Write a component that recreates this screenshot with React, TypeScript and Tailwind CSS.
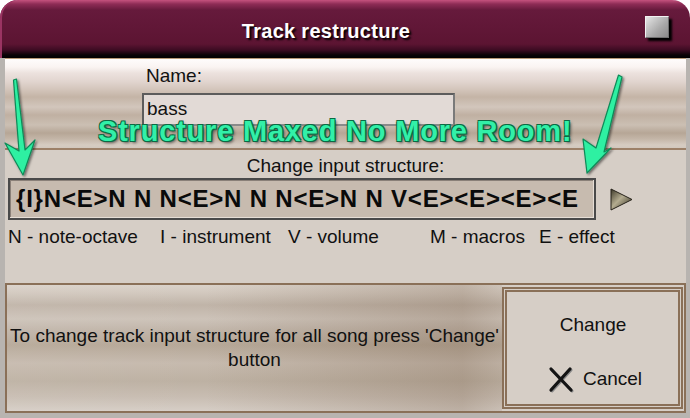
export default function App() {
  return (
    <div className="relative h-[418px] w-[690px] overflow-hidden bg-white font-['Liberation_Sans',Arial,sans-serif] text-[#111]">
      <div className="flex h-full flex-col">
        {/* title bar */}
        <div className="flex h-[58px] shrink-0 items-center rounded-t-[18px] bg-[linear-gradient(to_bottom,#c4527e_0px,#8e2c56_4px,#661a3c_10px,#5c1432_44px,#3c0b22_50px,#0a0206_55px,#000_58px)] pl-[7px] shadow-[inset_2px_0_0_#9a3462]">
          <div className="flex-1 pt-[3px] text-center text-[20px] font-bold tracking-[0.3px] text-white [text-shadow:2px_2px_2px_#000]">
            Track restructure
          </div>
          <div className="mr-[21px] mb-[4px] h-[22px] w-[24px] border border-[#f2f2f2] border-r-[#707070] border-b-[#707070] bg-[linear-gradient(135deg,#e6e6e6,#a8a8a8_60%,#8a8a8a)] shadow-[3px_3px_2px_#000]" />
        </div>

        {/* body */}
        <div className="flex flex-1 flex-col border-r-[4px] border-b-[5px] border-l-[5px] border-[#b8b4b0] bg-[#d6cec6]">
          {/* name panel */}
          <div className="h-[92px] shrink-0 border-t border-b-2 border-t-[#b89878] border-b-[#9c8068] bg-[linear-gradient(to_bottom,#fefcfc_0px,#faf4f2_8px,#ece2de_14px,#e2d6d0_22px,#d4c6bc_30px,#c4b4a6_38px,#d2c6bc_48px,#c0b0a2_56px,#cbbfb3_66px,#b6a696_74px,#c4b6a8_80px,#d6ccc2_86px,#cfc5bb_91px)] pl-[137px] pt-[7px]">
            <div className="h-[20px] pl-[4px] text-[19px] leading-[20px]">Name:</div>
            <div className="mt-[7px] flex h-[33px] w-[313px] items-center border-2 border-[#5c5c5c] border-r-[#7a7a7a] border-b-[#8a8a8a] bg-[#e2dad6] pl-[3px] text-[19px]">
              bass
            </div>
          </div>

          {/* structure label */}
          <div className="h-[28px] shrink-0 pt-[2px] text-center text-[19px] leading-[28px]">
            Change input structure:
          </div>

          {/* structure input */}
          <div className="flex h-[42px] shrink-0 items-center pl-[3px]">
            <div className="flex h-full w-[588px] items-center overflow-hidden border-2 border-[#4a4a4a] bg-[#c7bbaf] pl-[6px] text-[24px] font-bold tracking-[0.8px] whitespace-nowrap text-[#0a0a0a] shadow-[inset_-1px_-1px_0_#e6ded6,inset_1px_1px_0_#8a8078]">
              {"{I}N<E>N N N<E>N N N<E>N N V<E><E><E><E"}
            </div>
            <svg className="ml-[14px]" width="23" height="23" viewBox="0 0 23 23">
              <defs>
                <linearGradient id="tri" x1="0" y1="0" x2="1" y2="1">
                  <stop offset="0" stopColor="#3c3828" />
                  <stop offset="0.45" stopColor="#b4ac90" />
                  <stop offset="1" stopColor="#2a2618" />
                </linearGradient>
              </defs>
              <polygon points="1,1 22,11.5 1,22" fill="url(#tri)" stroke="#26221a" strokeWidth="1" />
            </svg>
          </div>

          {/* legend */}
          <div className="mt-[8px] flex h-[18px] shrink-0 pl-[3px] text-[19px] leading-[18px] whitespace-nowrap">
            <span className="w-[152px]">N - note-octave</span>
            <span className="w-[128px]">I - instrument</span>
            <span className="w-[142px]">V - volume</span>
            <span className="w-[109px]">M - macros</span>
            <span>E - effect</span>
          </div>

          {/* bottom panel */}
          <div className="mt-auto flex h-[130px] shrink-0 border-2 border-[#8a7058]">
            <div className="flex flex-1 flex-col items-center justify-center bg-[linear-gradient(to_right,rgba(255,255,255,0.05)_0%,transparent_40%,rgba(100,70,45,0.22)_92%,rgba(100,70,45,0.1)_100%),linear-gradient(to_bottom,#dad2ca_0px,#d2c8be_8px,#c0b4a8_20px,#cdc3b9_34px,#c0b4a8_46px,#b6a898_60px,#c6baae_78px,#bdb1a3_96px,#c8bdb2_112px,#d6cec6_126px)] text-center text-[19px] leading-[24px]">
              <div>To change track input structure for all song press 'Change'</div>
              <div>button</div>
            </div>
            <div className="my-[2px] mr-[1px] flex w-[181px] flex-col items-center justify-center border-[5px] border-double border-[#8a7058] bg-[#d6cec6] pt-[8px] text-[19px]">
              <div className="mb-[26px] pl-[1px]">Change</div>
              <div className="flex items-center gap-[9px] pl-[5px]">
                <svg width="26" height="27" viewBox="0 0 26 27">
                  <path d="M3 3 L23 24 M22 3 L3 24" stroke="#8a8a8a" strokeWidth="3" strokeLinecap="round" transform="translate(1,1)" />
                  <path d="M3 3 L23 24 M22 3 L3 24" stroke="#141414" strokeWidth="3.2" strokeLinecap="round" />
                </svg>
                <span>Cancel</span>
              </div>
            </div>
          </div>
        </div>
      </div>

      {/* annotation arrows */}
      <svg className="pointer-events-none absolute inset-0" width="690" height="418" viewBox="0 0 690 418">
        <defs>
          <filter id="sh" x="-20%" y="-20%" width="140%" height="140%">
            <feDropShadow dx="1.5" dy="1.5" stdDeviation="1.2" floodColor="#000" floodOpacity="0.5" />
          </filter>
        </defs>
        <polygon
          points="13.5,80 16.5,79 25,150 35,140 23,175 5,143 19,151"
          fill="#2ef0a2"
          stroke="#108a58"
          strokeWidth="1.2"
          strokeLinejoin="round"
          filter="url(#sh)"
        />
        <polygon
          points="618.5,75 622,77 604,152 611,148 587,173 583,139 596,148"
          fill="#2ef0a2"
          stroke="#108a58"
          strokeWidth="1.2"
          strokeLinejoin="round"
          filter="url(#sh)"
        />
      </svg>

      {/* annotation text */}
      <div className="pointer-events-none absolute top-[117px] left-[98px] text-[29px] leading-[29px] font-bold tracking-[0.8px] whitespace-nowrap text-[#32f0a8] [text-shadow:1px_1px_0_#0b6a44,-1px_-1px_0_#0b6a44,1px_-1px_0_#0b6a44,-1px_1px_0_#0b6a44,2px_2px_3px_rgba(0,0,0,0.55)]">
        Structure Maxed No More Room!
      </div>
    </div>
  );
}
